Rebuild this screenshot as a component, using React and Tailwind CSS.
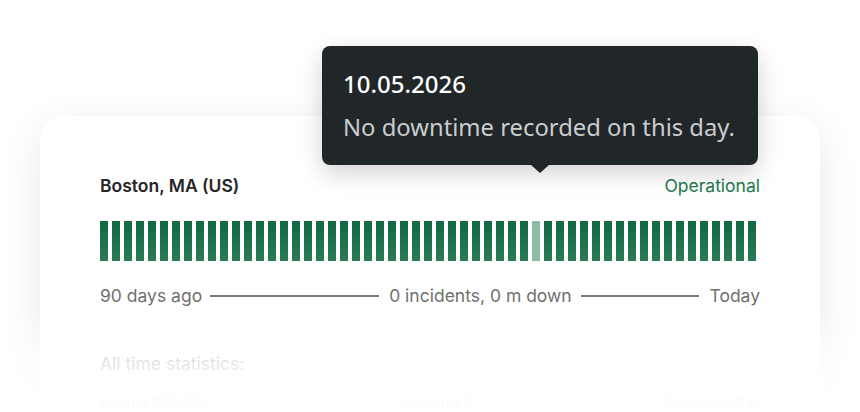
import React from "react";

const BAR_COUNT = 55;
const LIGHT_BAR = 36;

const Bars = () => {
  const bars = Array.from({ length: BAR_COUNT }, (_, i) => i);
  return (
    <div className="mt-[25px] flex h-[40px] gap-[4px]">
      {bars.map((i) =>
        i === LIGHT_BAR ? (
          <div key={i} className="h-full w-[8px] bg-[#8dbda4]" />
        ) : (
          <div
            key={i}
            className="h-full w-[8px] bg-gradient-to-b from-[#0f693f] to-[#2b7c56]"
          />
        )
      )}
    </div>
  );
};

const Tooltip = () => (
  <div
    className="absolute left-[322px] top-[46px] z-20 w-[436px] rounded-[8px] bg-[#212629] px-[21px] pt-[22px] pb-[22px] shadow-[0_8px_24px_rgba(0,0,0,0.18)]"
    style={{ fontFamily: '"Noto Sans", "Open Sans", sans-serif' }}
  >
    <div className="text-[24px] font-medium leading-[32px] text-white">10.05.2026</div>
    <div className="mt-[11px] whitespace-nowrap text-[23.8px] leading-[32px] text-[#c9cdcf]">
      No downtime recorded on this day.
    </div>
    {/* arrow */}
    <div className="absolute -bottom-[8px] left-[209px] h-0 w-0 border-x-[9px] border-t-[8px] border-x-transparent border-t-[#212629]" />
  </div>
);

export default function App() {
  return (
    <div
      className="relative h-[412px] w-[860px] overflow-hidden bg-white"
      style={{ fontFamily: 'Inter, "Noto Sans", sans-serif' }}
    >
      <Tooltip />

      <div className="ml-[40px] mt-[116px] w-[780px] rounded-[24px] bg-white px-[60px] pt-[60px] pb-[40px] shadow-[0_10px_40px_rgba(0,0,0,0.09)]">
        <div className="flex items-center justify-between text-[17.5px] leading-[20px]">
          <span className="font-semibold text-[#262626]">Boston, MA (US)</span>
          <span className="text-[#23784f]">Operational</span>
        </div>

        <Bars />

        <div className="mt-[25px] flex items-center text-[17.5px] leading-[20px] text-[#707070]">
          <span>90 days ago</span>
          <div className="ml-[8px] mr-[10px] h-[2px] w-[169px] bg-[#7a7a7a]" />
          <span>0 incidents, 0 m down</span>
          <div className="ml-[9px] mr-[10px] h-[2px] flex-1 bg-[#7a7a7a]" />
          <span>Today</span>
        </div>

        <div className="mt-[48px] text-[17.5px] leading-[20px] text-[#707070]">
          All time statistics:
        </div>

        <div className="mt-[20px] flex justify-between text-[14px] leading-[18px] text-[#707070]">
          <span>Uptime 100.00%</span>
          <span>Incidents 0</span>
          <span>Downtime 0 m</span>
        </div>
      </div>

      {/* bottom fade */}
      <div className="pointer-events-none absolute bottom-0 left-0 z-10 h-[102px] w-full bg-gradient-to-b from-white/0 via-white/80 via-50% to-white/[0.97] to-85%" />
    </div>
  );
}
